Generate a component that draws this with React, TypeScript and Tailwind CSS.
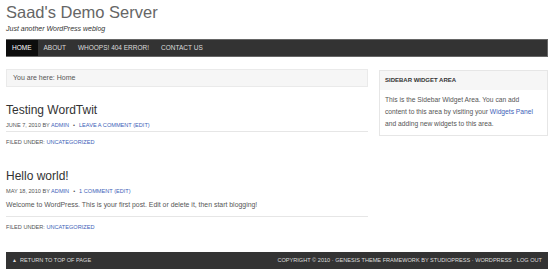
import React from 'react';

const navItems = ['HOME', 'ABOUT', 'WHOOPS! 404 ERROR!', 'CONTACT US'];

const Post: React.FC<{ title: string; date: string; comments: string; body?: string; className?: string }> = ({
  title,
  date,
  comments,
  body,
  className = '',
}) => (
  <div className={className}>
    <h2 className="text-[12px] leading-[14px] text-[#333] mb-[4px]">{title}</h2>
    <div className="text-[5.6px] leading-[8px] text-[#555] uppercase">
      {date} BY <span className="text-[#3d62b8]">ADMIN</span>
      <span className="mx-[4px]">•</span>
      <span className="text-[#3d62b8]">{comments} (EDIT)</span>
    </div>
    {body && <p className="text-[6.9px] leading-[10px] text-[#555] mt-[5px]">{body}</p>}
    <div className={`border-t border-[#e6e6e6] pt-[6px] text-[5.6px] leading-[8px] text-[#555] ${body ? 'mt-[6px]' : 'mt-[2px]'}`}>
      FILED UNDER: <span className="text-[#3d62b8]">UNCATEGORIZED</span>
    </div>
  </div>
);

export default function App() {
  return (
    <div
      className="w-[550px] h-[271px] bg-white overflow-hidden pl-[6px] pr-[2px] pt-[3px] flex flex-col"
      style={{ fontFamily: '"Liberation Sans", Arial, sans-serif' }}
    >
      {/* Header */}
      <div className="h-[36px] shrink-0">
        <h1 className="text-[16.5px] leading-[19px] text-[#666]">Saad's Demo Server</h1>
        <p className="text-[7px] leading-[9px] italic text-[#333] mt-[2px]">Just another WordPress weblog</p>
      </div>

      {/* Nav */}
      <nav className="flex h-[18px] shrink-0 bg-[#333] border border-[#666] border-l-0">
        {navItems.map((item, i) => (
          <div
            key={item}
            className={`flex items-center px-[6px] text-[6.5px] ${i === 0 ? 'bg-[#0d0d0d] text-white' : 'text-[#ddd]'}`}
          >
            {item}
          </div>
        ))}
      </nav>

      <div className="flex gap-[11px] mt-[12px] flex-1 min-h-0">
        {/* Content */}
        <div className="w-[362px]">
          <div className="h-[18px] bg-[#f6f6f6] border border-[#eaeaea] flex items-center px-[6px] text-[7px] text-[#555]">
            You are here: Home
          </div>
          <div className="mt-[16px]">
            <Post title="Testing WordTwit" date="June 7, 2010" comments="Leave a Comment" className="mb-[23px]" />
            <Post
              title="Hello world!"
              date="May 18, 2010"
              comments="1 Comment"
              body="Welcome to WordPress. This is your first post. Edit or delete it, then start blogging!"
            />
          </div>
        </div>

        {/* Sidebar */}
        <div className="w-[169px] pt-[1px]">
          <div className="border border-[#e6e6e6]">
            <div className="bg-[#f6f6f6] h-[19px] flex items-center px-[5px] text-[6px] font-bold text-[#333]">
              SIDEBAR WIDGET AREA
            </div>
            <p className="px-[5px] pt-[4px] pb-[5px] text-[6.7px] leading-[12px] text-[#555]">
              This is the Sidebar Widget Area. You can add content to this area by visiting your{' '}
              <span className="text-[#3d62b8]">Widgets Panel</span> and adding new widgets to this area.
            </p>
          </div>
        </div>
      </div>

      {/* Footer */}
      <div className="h-[17px] mb-[2px] shrink-0 bg-[#333] flex items-center justify-between px-[6px] text-[5.6px] text-[#ddd]">
        <span className="flex items-center gap-[3px]">
          <span className="text-[5px]">▲</span> RETURN TO TOP OF PAGE
        </span>
        <span>COPYRIGHT © 2010 · GENESIS THEME FRAMEWORK BY STUDIOPRESS · WORDPRESS · LOG OUT</span>
      </div>
    </div>
  );
}
